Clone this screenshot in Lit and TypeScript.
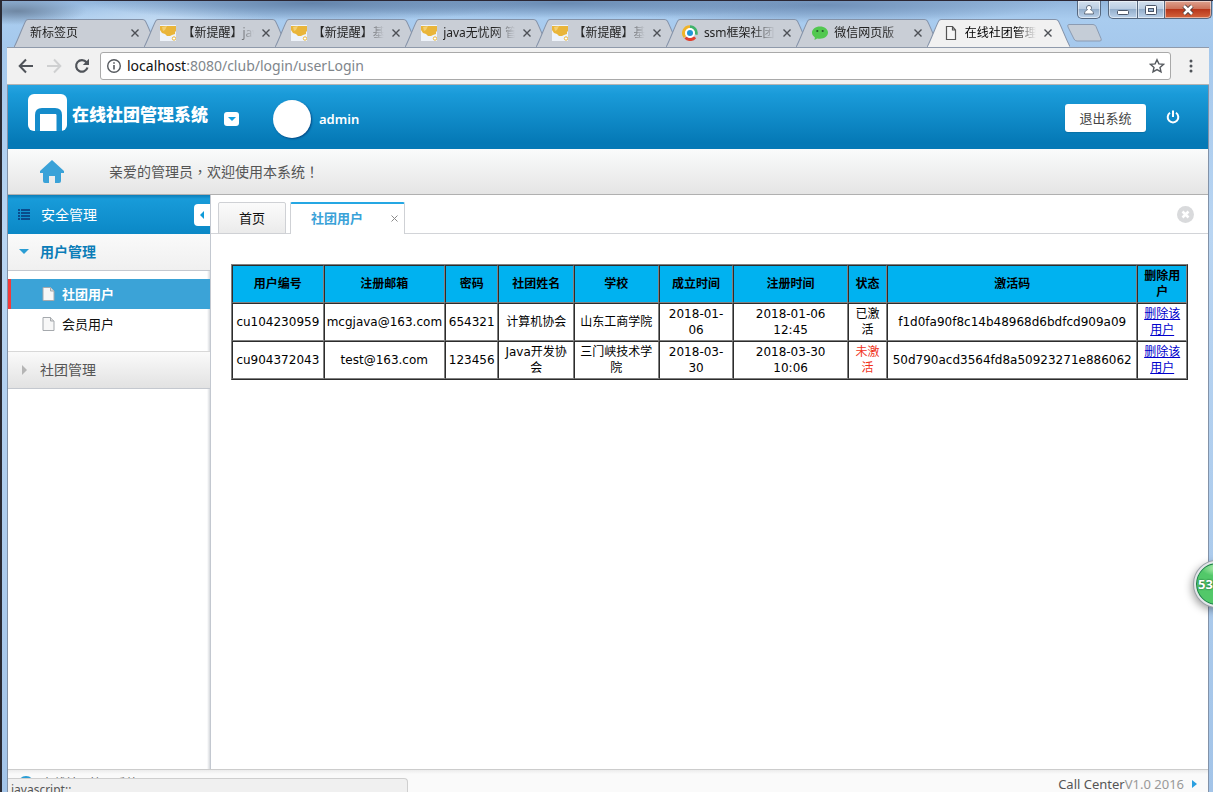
import { LitElement, html, css, svg, nothing } from "lit";
import { customElement, property, state } from "lit/decorators.js";
import { classMap } from "lit/directives/class-map.js";

type Favicon = "none" | "cup" | "ring" | "chat" | "page";

interface BrowserTab {
  title: string;
  icon: Favicon;
}

interface ClubUser {
  id: string;
  mail: string;
  password: string;
  name: string;
  school: string;
  founded: string;
  registered: [string, string];
  active: boolean;
  code: string;
}

const TABS: BrowserTab[] = [
  { title: "新标签页", icon: "none" },
  { title: "【新提醒】java", icon: "cup" },
  { title: "【新提醒】基", icon: "cup" },
  { title: "java无忧网 管", icon: "cup" },
  { title: "【新提醒】基", icon: "cup" },
  { title: "ssm框架社团", icon: "ring" },
  { title: "微信网页版", icon: "chat" },
  { title: "在线社团管理", icon: "page" },
];

const USERS: ClubUser[] = [
  {
    id: "cu104230959",
    mail: "mcgjava@163.com",
    password: "654321",
    name: "计算机协会",
    school: "山东工商学院",
    founded: "2018-01-06",
    registered: ["2018-01-06", "12:45"],
    active: true,
    code: "f1d0fa90f8c14b48968d6bdfcd909a09",
  },
  {
    id: "cu904372043",
    mail: "test@163.com",
    password: "123456",
    name: "Java开发协会",
    school: "三门峡技术学院",
    founded: "2018-03-30",
    registered: ["2018-03-30", "10:06"],
    active: false,
    code: "50d790acd3564fd8a50923271e886062",
  },
];

const favicons = {
  none: nothing,
  cup: svg`<rect width="16" height="16" fill="#eef3fa"/><path d="M0 1h16v5l-1 1v2l-3 1-2 1H7L5 9 2 8 0 5z" fill="#e9b53a"/><path d="M2 2l5-1-2 4-2 1z" fill="#f3cf72"/><circle cx="14" cy="13.500" r="1.700" fill="#fff" stroke="#e9b53a"/>`,
  ring: svg`<g fill="none" stroke-width="3"><path d="M8 1.700A6.300 6.300 0 0 0 3 12" stroke="#f0b429"/><path d="M8 1.700a6.300 6.300 0 0 1 6 8" stroke="#3fb36a"/><path d="M3.500 12.500A6.300 6.300 0 0 0 13 12.300" stroke="#e2402f"/></g><circle cx="8" cy="8" r="5" fill="#fff"/><circle cx="8" cy="8" r="3" fill="#2196d6"/>`,
  chat: svg`<path d="M8 1.500c4.500 0 8 2.600 8 6.100s-3.500 6.200-8 6.200c-1 0-2-.1-2.800-.4L2.500 15l.4-2.600C1.100 11.300 0 9.600 0 7.600c0-3.500 3.500-6.100 8-6.100z" fill="#51c850"/><circle cx="5.300" cy="6" r="1.100" fill="#235a2c"/><circle cx="10.700" cy="6" r="1.100" fill="#235a2c"/>`,
  page: svg`<path d="M3.500 1.500h6l3 3.500v9.500h-9zM9.500 1.500V5h3" fill="#f6f6f6" stroke="#555" stroke-width="1.200"/>`,
};

@customElement("browser-tab")
export class BrowserTabItem extends LitElement {
  @property() title = "";
  @property() icon: Favicon = "none";
  @property({ type: Boolean, reflect: true }) active = false;

  static styles = css`
    :host {
      position: relative;
      display: flex;
      align-items: center;
      flex: 1 1 0;
      min-width: 0;
      height: 28px;
      box-sizing: border-box;
      padding: 0 0 0 16px;
      color: #222;
    }
    :host([active]) {
      z-index: 1;
      color: #000;
    }
    .shape {
      position: absolute;
      inset: 0 -13px 0 0;
      width: calc(100% + 13px);
      height: 100%;
    }
    .icon {
      position: relative;
      flex: none;
      width: 16px;
      height: 16px;
      margin-right: 6px;
    }
    .title {
      position: relative;
      flex: 1;
      margin-right: 3px;
      overflow: hidden;
      white-space: nowrap;
      font-size: 12px;
      line-height: 18px;
      mask-image: linear-gradient(to right, #000 70%, transparent);
    }
    .close {
      position: relative;
      flex: none;
      width: 18px;
      height: 18px;
      padding: 0;
      border: 0;
      background: none;
      display: grid;
      place-items: center;
    }
  `;

  render() {
    return html`
      <svg class="shape" viewBox="0 0 143 28" preserveAspectRatio="none">
        <path
          d="M0 28 C2 26 10 4 12 1.500 Q13 .5 14 .5H128Q130 .5 131 2C133 5 141 26 143 28"
          fill=${this.active ? "#f1f1f1" : "#c9ced6"}
          stroke="#8492a8"
        />
      </svg>
      ${this.icon === "none"
        ? nothing
        : html`<svg class="icon" viewBox="0 0 16 16">${favicons[this.icon]}</svg>`}
      <span class="title">${this.title}</span>
      <button class="close" aria-label="关闭标签页">
        <svg width="8" height="8" viewBox="0 0 8 8">
          <path d="M.5.5l7 7M7.500.5l-7 7" stroke="#4c4f55" stroke-width="1.400" />
        </svg>
      </button>
    `;
  }
}

@customElement("browser-chrome")
export class BrowserChrome extends LitElement {
  static styles = css`
    :host {
      display: block;
    }
    button {
      padding: 0;
      border: 0;
      background: none;
      display: grid;
      place-items: center;
    }
    .controls {
      display: flex;
      justify-content: flex-end;
      height: 18px;
      padding-right: 1px;
    }
    .controls button {
      box-sizing: border-box;
      height: 18px;
      border: 1px solid #56687f;
      border-top: 0;
      background: linear-gradient(#d3e0ee, #b9cce1 48%, #94aecb 50%, #bcd2ea);
      box-shadow: inset 0 0 0 1px rgba(255, 255, 255, 0.5);
    }
    .controls .person {
      width: 24px;
      margin-right: 7px;
      border-radius: 0 0 5px 5px;
    }
    .controls .min {
      width: 30px;
      border-radius: 0 0 0 5px;
    }
    .controls .max {
      width: 27px;
      border-left: 0;
    }
    .controls .exit {
      width: 47px;
      border-left: 0;
      border-radius: 0 0 5px 0;
      background: linear-gradient(#dea28f, #cc7158 48%, #b8371b 50%, #d5643c);
    }
    .strip {
      display: flex;
      padding: 0 111px 0 12px;
    }
    .tabs {
      display: flex;
      flex: 1;
      min-width: 0;
    }
    .new {
      flex: none;
      width: 35px;
      margin-left: 10px;
    }
    .toolbar {
      display: flex;
      align-items: center;
      height: 38px;
      margin: 0 4px 0 5px;
      box-sizing: border-box;
      padding: 0 12px 0 9px;
      background: #f1f1f1;
      border-bottom: 1px solid #b3b3b3;
      border-top: 1px solid #8f9aab;
    }
    .nav {
      display: flex;
      gap: 8px;
      margin-right: 8px;
    }
    .nav button {
      width: 20px;
      height: 20px;
    }
    .box {
      flex: 1;
      display: flex;
      align-items: center;
      height: 28px;
      box-sizing: border-box;
      border: 1px solid #a9a9a9;
      border-radius: 3px;
      background: #fff;
      padding: 0 5px;
      gap: 5px;
    }
    .address {
      flex: 1;
      font-size: 14px;
      line-height: 20px;
      color: #80868b;
      text-decoration: none;
      white-space: nowrap;
    }
    .address .host {
      color: #111;
    }
    .more {
      width: 12px;
      height: 20px;
      margin-left: 14px;
    }
  `;

  render() {
    return html`
      <div class="controls">
        <button class="person" aria-label="用户">
          <svg width="12" height="12" viewBox="0 0 12 12">
            <path
              d="M6 1.500a2.300 2.300 0 0 1 1.500 4.200C9.500 6.200 10.500 8 10.500 10h-9c0-2 1-3.800 3-4.300A2.300 2.300 0 0 1 6 1.500z"
              fill="#fff"
              stroke="#606d7e"
            />
          </svg>
        </button>
        <button class="min" aria-label="最小化">
          <svg width="14" height="12" viewBox="0 0 14 12">
            <rect x="1.500" y="6.500" width="11" height="4" rx="1" fill="#fff" stroke="#4a5568" />
          </svg>
        </button>
        <button class="max" aria-label="最大化">
          <svg width="14" height="12" viewBox="0 0 14 12">
            <rect x="1.500" y="1.500" width="11" height="9" rx="1" fill="#fff" stroke="#4a5568" />
            <rect x="4.500" y="4.500" width="5" height="3" fill="#9db6d2" stroke="#4a5568" />
          </svg>
        </button>
        <button class="exit" aria-label="关闭">
          <svg width="14" height="12" viewBox="0 0 14 12">
            <path d="M3 2l8 8M11 2l-8 8" stroke="#4b4040" stroke-width="4.500" />
            <path d="M3 2l8 8M11 2l-8 8" stroke="#fff" stroke-width="2.500" />
          </svg>
        </button>
      </div>
      <div class="strip">
        <div class="tabs">
          ${TABS.map(
            (t, i) => html`<browser-tab
              .title=${t.title}
              .icon=${t.icon}
              ?active=${i === TABS.length - 1}
            ></browser-tab>`
          )}
        </div>
        <button class="new" aria-label="新标签页">
          <svg width="35" height="18" viewBox="0 0 35 18">
            <path
              d="M2 .5h24q2 0 3 2l5 12q1 2.500-1 2.500H10q-2 0-3-2L1 3Q0 .5 2 .5z"
              fill="#c5cdd7"
              stroke="#8b9bb2"
            />
          </svg>
        </button>
      </div>
      <div class="toolbar">
        <div class="nav">
          <button aria-label="后退">
            <svg width="16" height="16" viewBox="0 0 16 16" fill="none" stroke="#50545a" stroke-width="2">
              <path d="M15 8H2.500M8 1.500 1.700 8 8 14.500" />
            </svg>
          </button>
          <button aria-label="前进">
            <svg width="16" height="16" viewBox="0 0 16 16" fill="none" stroke="#cfd0d1" stroke-width="2">
              <path d="M1 8h12.500M8 1.500 14.300 8 8 14.500" />
            </svg>
          </button>
          <button aria-label="刷新">
            <svg width="16" height="16" viewBox="0 0 16 16">
              <path
                d="M13.500 9.500A5.800 5.800 0 1 1 12.500 4.300"
                fill="none"
                stroke="#50545a"
                stroke-width="2.200"
              />
              <path d="M15 .8V7H8.800z" fill="#50545a" />
            </svg>
          </button>
        </div>
        <div class="box">
          <svg width="16" height="16" viewBox="0 0 16 16">
            <circle cx="8" cy="8" r="6.300" fill="none" stroke="#55595e" stroke-width="1.400" />
            <path d="M8 7v4.500M8 4.300v1.500" stroke="#55595e" stroke-width="1.600" />
          </svg>
          <a class="address" href="#"><span class="host">localhost</span>:8080/club/login/userLogin</a>
          <button aria-label="收藏">
            <svg width="16" height="16" viewBox="0 0 16 16">
              <path
                d="M8 1.700l1.900 4.200 4.500.5-3.400 3 1 4.500L8 11.600l-4 2.300 1-4.500-3.400-3 4.500-.5z"
                fill="none"
                stroke="#55595e"
                stroke-width="1.400"
              />
            </svg>
          </button>
        </div>
        <button class="more" aria-label="菜单">
          <svg width="4" height="14" viewBox="0 0 4 14" fill="#50545a">
            <circle cx="2" cy="2" r="1.500" />
            <circle cx="2" cy="7" r="1.500" />
            <circle cx="2" cy="12" r="1.500" />
          </svg>
        </button>
      </div>
    `;
  }
}

@customElement("page-header")
export class PageHeader extends LitElement {
  static styles = css`
    :host {
      display: block;
    }
    button {
      padding: 0;
      border: 0;
      background: none;
      display: grid;
      place-items: center;
    }
    .bar {
      display: flex;
      align-items: center;
      height: 64px;
      padding: 0 28px 0 20px;
      background: linear-gradient(#27a4e1, #1a9bd9 14%, #0579b6 90%);
    }
    .logo {
      flex: none;
      margin-bottom: 8px;
    }
    .name {
      margin: 0 0 4px 4px;
      color: #fff;
      font-size: 17px;
      line-height: 24px;
      font-weight: 900;
      white-space: nowrap;
    }
    .drop {
      width: 15px;
      height: 14px;
      margin: 4px 0 0 16px;
      border-radius: 3px;
      background: #fff;
    }
    .avatar {
      width: 38px;
      height: 38px;
      margin: 4px 8px 0 34px;
      border-radius: 50%;
      background: #fff;
      box-shadow: 1px 1px 2px #034a86;
    }
    .who {
      flex: 1;
      margin-top: 4px;
      color: #fff;
      font-size: 13px;
      line-height: 18px;
      font-weight: 600;
    }
    .exit {
      width: 81px;
      height: 28px;
      margin: 2px 20px 0 0;
      border-radius: 3px;
      background: #fff;
      box-shadow: 0 1px 1px #0870a5;
      font: inherit;
      font-size: 13px;
      line-height: 20px;
      color: #444;
    }
    .welcome {
      display: flex;
      align-items: center;
      gap: 45px;
      height: 46px;
      box-sizing: border-box;
      padding-left: 32px;
      background: linear-gradient(#fafbfb, #e5e5e5);
      border-bottom: 1px solid #b0b0b0;
      font-family: "Noto Sans", "Noto Sans CJK TC", sans-serif;
      font-size: 14px;
      line-height: 20px;
      color: #555;
    }
  `;

  render() {
    return html`
      <header class="bar">
        <svg class="logo" width="40" height="38" viewBox="0 0 40 38">
          <rect width="39" height="37" rx="6" fill="#fff" />
          <path d="M8 37V21q0-6 6-6h13q6 0 6 6v16" fill="none" stroke="#158ccb" stroke-width="2" />
          <path d="M12 37V20h17v17" fill="none" stroke="#158ccb" stroke-width="1" />
          <path d="M8 37V21q0-6 6-6h13q6 0 6 6v16h-4V20H12v17z" fill="#158ccb" />
          <path d="M12 20h16v17H12z" fill="#fff" />
        </svg>
        <span class="name">在线社团管理系统</span>
        <button class="drop" aria-label="展开">
          <svg width="8" height="4" viewBox="0 0 8 4"><path d="M0 0h8L4 4z" fill="#12a0e0" /></svg>
        </button>
        <span class="avatar"></span>
        <span class="who">admin</span>
        <button class="exit">退出系统</button>
        <button aria-label="关机">
          <svg width="14" height="14" viewBox="0 0 14 14" fill="none" stroke="#fff" stroke-width="2">
            <path d="M4 2.800a5.300 5.300 0 1 0 6 0M7 .5v6.500" />
          </svg>
        </button>
      </header>
      <div class="welcome">
        <svg width="24" height="23" viewBox="0 0 24 23">
          <path
            d="M12 0L24 11v2h-3v8q0 2-2 2h-4v-7H9v7H5q-2 0-2-2v-8H0v-2z"
            fill="#3aa2d8"
          />
        </svg>
        <span>亲爱的管理员，欢迎使用本系统！</span>
      </div>
    `;
  }
}

@customElement("side-menu")
export class SideMenu extends LitElement {
  @state() private current = "社团用户";

  static styles = css`
    :host {
      display: block;
      flex: none;
      width: 202px;
      box-sizing: border-box;
      background: linear-gradient(to right, transparent 199px, #d5d8dc) #fff;
      font-size: 14px;
      line-height: 20px;
    }
    .head,
    .group,
    .item {
      display: flex;
      align-items: center;
      box-sizing: border-box;
      width: 100%;
      font: inherit;
      text-align: left;
    }
    .head {
      height: 39px;
      padding-left: 10px;
      gap: 11px;
      color: #fff;
      background: linear-gradient(#0c7db8, #189bd9 10%, #0b88c6);
    }
    .head span {
      flex: 1;
    }
    .fold {
      display: grid;
      place-items: center;
      width: 16px;
      height: 22px;
      padding: 0;
      border: 0;
      border-radius: 4px 0 0 4px;
      background: #fff;
    }
    .group {
      height: 37px;
      padding: 0 0 0 11px;
      gap: 11px;
      border: 0;
      border-bottom: 1px solid #c4c8cf;
      background: linear-gradient(#fafafa, #f0f0f0);
      color: #555;
    }
    .group.open {
      color: #0b7db8;
      font-weight: 700;
    }
    .group.closed {
      height: 38px;
      border-top: 1px solid #d8d8d8;
      background: linear-gradient(#fafafa, #e2e2e2);
    }
    .list {
      margin: 0;
      padding: 8px 0 12px;
      list-style: none;
    }
    .item {
      height: 30px;
      padding-left: 31px;
      gap: 7px;
      border-left: 3px solid transparent;
      font-size: 13px;
      color: #111;
      text-decoration: none;
    }
    .item.on {
      background: #3ba3d7;
      border-left-color: #f33a3a;
      color: #fff;
      font-weight: 700;
    }
  `;

  private item(name: string) {
    return html`<li>
      <a
        class=${classMap({ item: true, on: this.current === name })}
        href="#"
        @click=${(e: Event) => {
          e.preventDefault();
          this.current = name;
        }}
      >
        <svg width="13" height="14" viewBox="0 0 13 14">
          <path d="M1 .5h7.500L12 4v9.500H1z" fill="#f7f7f7" stroke="#a5a9ad" />
          <path d="M8.500.5V4H12" fill="#ddd" stroke="#a5a9ad" />
        </svg>
        ${name}</a
      >
    </li>`;
  }

  render() {
    return html`
      <div class="head">
        <svg width="12" height="11" viewBox="0 0 12 11" fill="#0a4b8c">
          <path d="M0 0h2v2H0zM3 0h9v2H3zM0 3h2v2H0zM3 3h9v2H3zM0 6h2v2H0zM3 6h9v2H3zM0 9h2v2H0zM3 9h9v2H3z" />
        </svg>
        <span>安全管理</span>
        <button class="fold" aria-label="收起">
          <svg width="4" height="8" viewBox="0 0 4 8"><path d="M4 0v8L0 4z" fill="#0e9ad8" /></svg>
        </button>
      </div>
      <button class="group open">
        <svg width="10" height="10" viewBox="0 0 10 10"><path d="M0 2h10L5 7z" fill="#2a9dd4" /></svg>
        用户管理
      </button>
      <ul class="list">
        ${this.item("社团用户")}${this.item("会员用户")}
      </ul>
      <button class="group closed">
        <svg width="10" height="10" viewBox="0 0 10 10"><path d="M3 0v10l5-5z" fill="#b5b5b5" /></svg>
        社团管理
      </button>
    `;
  }
}

@customElement("user-panel")
export class UserPanel extends LitElement {
  static styles = css`
    :host {
      display: block;
      flex: 1;
      min-width: 0;
      background: #fff;
      border-left: 1px solid #c3c8d0;
    }
    .tabs {
      display: flex;
      align-items: flex-end;
      gap: 4px;
      height: 39px;
      box-sizing: border-box;
      padding: 0 14px 0 7px;
      border-bottom: 1px solid #d2d4d8;
    }
    .tab {
      box-sizing: border-box;
      height: 32px;
      padding: 0 20px;
      margin-bottom: -1px;
      border: 1px solid #cfd1d5;
      border-radius: 2px 2px 0 0;
      background: linear-gradient(#fbfbfb, #ebebeb);
      font: inherit;
      font-size: 13px;
      line-height: 20px;
      color: #111;
    }
    .tab.on {
      display: flex;
      align-items: center;
      gap: 28px;
      padding: 0 6px 2px 20px;
      border-top: 2px solid #25a7e3;
      border-bottom: 0;
      background: #fff;
      color: #3aa2d8;
      font-weight: 700;
    }
    .closeall {
      margin: 0 0 10px auto;
      padding: 0;
      border: 0;
      background: none;
      display: flex;
    }
    .content {
      padding: 30px 20px 20px;
    }
    .grid {
      width: 100%;
      table-layout: fixed;
      border-collapse: separate;
      border-spacing: 0;
      border: 1px solid;
      border-color: #808080 #2c2c2c #2c2c2c #808080;
      font-family: "DejaVu Sans", "Noto Sans CJK SC", sans-serif;
      font-size: 12px;
      line-height: 16px;
      color: #000;
    }
    th,
    td {
      height: 32px;
      padding: 2px;
      border: 1px solid;
      border-color: #2c2c2c #808080 #808080 #2c2c2c;
      text-align: center;
      vertical-align: middle;
    }
    th {
      background: #00b2f0;
      font-weight: 700;
    }
    .off {
      color: #f0341c;
    }
    a {
      color: #00c;
    }
    .id { width: 9.6%; }
    .mail { width: 12.7%; }
    .pass { width: 5.6%; }
    .name { width: 7.9%; }
    .school { width: 8.9%; }
    .date { width: 7.8%; }
    .time { width: 12%; }
    .state { width: 4.1%; }
    .del { width: 5.2%; }
  `;

  render() {
    return html`
      <nav class="tabs">
        <button class="tab">首页</button>
        <button class="tab on">
          社团用户
          <svg width="7" height="7" viewBox="0 0 7 7"><path d="M.5.5l6 6M6.500.5l-6 6" stroke="#8a8a8a" /></svg>
        </button>
        <button class="closeall" aria-label="关闭全部">
          <svg width="17" height="17" viewBox="0 0 17 17">
            <circle cx="8.500" cy="8.500" r="8.500" fill="#d9dadc" />
            <path d="M5.500 5.500l6 6M11.500 5.500l-6 6" stroke="#fff" stroke-width="2.500" />
          </svg>
        </button>
      </nav>
      <div class="content">
        <table class="grid">
          <colgroup>
            <col class="id" /><col class="mail" /><col class="pass" /><col class="name" /><col class="school" />
            <col class="date" /><col class="time" /><col class="state" /><col /><col class="del" />
          </colgroup>
          <thead>
            <tr>
              ${["用户编号", "注册邮箱", "密码", "社团姓名", "学校", "成立时间", "注册时间", "状态", "激活码", "删除用户"].map(
                (h) => html`<th scope="col">${h}</th>`
              )}
            </tr>
          </thead>
          <tbody>
            ${USERS.map(
              (u) => html`<tr>
                <td>${u.id}</td>
                <td>${u.mail}</td>
                <td>${u.password}</td>
                <td>${u.name}</td>
                <td>${u.school}</td>
                <td>${u.founded}</td>
                <td>${u.registered[0]}<br />${u.registered[1]}</td>
                <td class=${classMap({ off: !u.active })}>${u.active ? "已激活" : "未激活"}</td>
                <td>${u.code}</td>
                <td><a href="#">删除该用户</a></td>
              </tr>`
            )}
          </tbody>
        </table>
      </div>
    `;
  }
}

@customElement("app-root")
export class AppRoot extends LitElement {
  static styles = css`
    :host {
      position: relative;
      display: flex;
      flex-direction: column;
      height: 100vh;
      overflow: hidden;
      box-sizing: border-box;
      border-top: 1px solid #2b2633;
      border-left: 2px solid #2a2a33;
      font-family: "Noto Sans", "Noto Sans CJK SC", sans-serif;
      background:
        radial-gradient(ellipse 70px 14px at 15px 10px, #6f87a3 0, transparent 100%),
        radial-gradient(ellipse 220px 18px at 310px 2px, #6484ab 0, transparent 100%),
        radial-gradient(ellipse 260px 15px at 560px 2px, #6a8bb3 0, transparent 100%),
        radial-gradient(ellipse 240px 18px at 820px 4px, #7090b8 0, transparent 100%),
        radial-gradient(ellipse 120px 20px at 150px 20px, #c2daf2 0, transparent 100%),
        linear-gradient(#93b6dc, #a9ccef 18px, #a5c8ec 50px, #b9d5f2 230px, #a3c4e8);
    }
    .page {
      flex: 1;
      min-height: 0;
      display: flex;
      flex-direction: column;
      margin: 0 4px 0 5px;
      border-left: 1px solid #8292a8;
      border-right: 1px solid #8292a8;
      background: #fff;
    }
    .body {
      flex: 1;
      min-height: 0;
      display: flex;
    }
    .foot {
      flex: none;
      display: flex;
      align-items: center;
      height: 23px;
      box-sizing: border-box;
      padding: 6px 11px 0 10px;
      border-top: 1px solid #ccc;
      background: linear-gradient(#ececec, #fafafa 4px);
      font-size: 13px;
      line-height: 18px;
      color: #555;
      white-space: nowrap;
    }
    .foot .mark {
      flex: 1;
      display: flex;
      align-items: center;
      gap: 8px;
      height: 18px;
      font-size: 12px;
    }
    .dot {
      width: 16px;
      height: 16px;
      border-radius: 50%;
      background: #2a9dd4;
    }
    .ver {
      color: #999;
      margin-right: 8px;
    }
    .status {
      position: absolute;
      left: 6px;
      bottom: 0;
      width: 33%;
      height: 14px;
      box-sizing: border-box;
      padding: 3px 3px 0;
      overflow: hidden;
      border: 1px solid #cfcfcf;
      border-width: 1px 1px 0 0;
      border-radius: 0 4px 0 0;
      background: #f0f0f0;
      font-size: 12px;
      line-height: 16px;
      color: #555;
    }
    .ball {
      position: absolute;
      right: -27px;
      top: 560px;
      width: 46px;
      height: 46px;
      box-sizing: border-box;
      padding-left: 2px;
      border: 2px solid #e4e6ea;
      border-radius: 50%;
      background: radial-gradient(ellipse 16px 8px at 50% 5px, #b8efb4, transparent), #52c869;
      box-shadow: 0 0 0 1px #9aa0a8, inset 0 0 0 1px #1c7a4c, -2px 3px 8px rgba(0, 0, 0, 0.4);
      color: #fff;
      font-size: 13px;
      line-height: 42px;
      font-weight: 700;
      text-shadow: 0 0 2px #0a4a26;
    }
  `;

  render() {
    return html`
      <browser-chrome></browser-chrome>
      <main class="page">
        <page-header></page-header>
        <div class="body">
          <side-menu></side-menu>
          <user-panel></user-panel>
        </div>
        <footer class="foot">
          <span class="mark"><i class="dot"></i>在线社团管理系统</span>
          <span>Call Center</span><span class="ver">V1.0 2016</span>
          <svg width="5" height="8" viewBox="0 0 5 8"><path d="M0 0l5 4-5 4z" fill="#2a9fe0" /></svg>
        </footer>
      </main>
      <div class="status">javascript:;</div>
      <div class="ball">53</div>
    `;
  }
}
